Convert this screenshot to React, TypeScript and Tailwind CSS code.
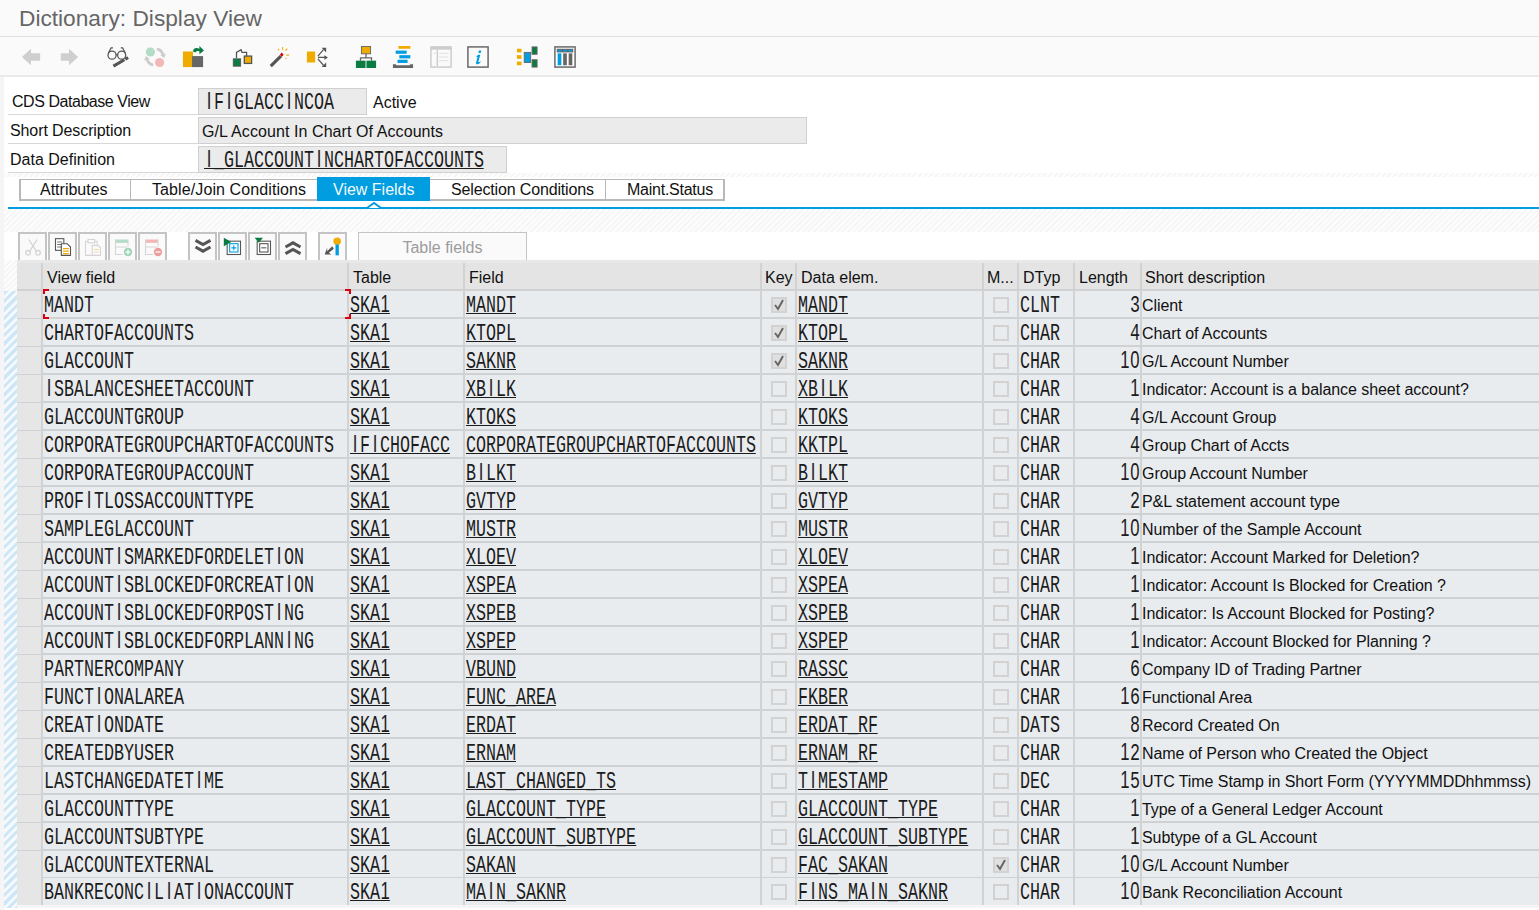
import React from "react";

type Row = [string, string, string, boolean, string, boolean, string, string, string];

const rows: Row[] = [
  ["MANDT", "SKA1", "MANDT", true, "MANDT", false, "CLNT", "3", "Client"],
  ["CHARTOFACCOUNTS", "SKA1", "KTOPL", true, "KTOPL", false, "CHAR", "4", "Chart of Accounts"],
  ["GLACCOUNT", "SKA1", "SAKNR", true, "SAKNR", false, "CHAR", "10", "G/L Account Number"],
  ["ISBALANCESHEETACCOUNT", "SKA1", "XBILK", false, "XBILK", false, "CHAR", "1", "Indicator: Account is a balance sheet account?"],
  ["GLACCOUNTGROUP", "SKA1", "KTOKS", false, "KTOKS", false, "CHAR", "4", "G/L Account Group"],
  ["CORPORATEGROUPCHARTOFACCOUNTS", "IFICHOFACC", "CORPORATEGROUPCHARTOFACCOUNTS", false, "KKTPL", false, "CHAR", "4", "Group Chart of Accts"],
  ["CORPORATEGROUPACCOUNT", "SKA1", "BILKT", false, "BILKT", false, "CHAR", "10", "Group Account Number"],
  ["PROFITLOSSACCOUNTTYPE", "SKA1", "GVTYP", false, "GVTYP", false, "CHAR", "2", "P&L statement account type"],
  ["SAMPLEGLACCOUNT", "SKA1", "MUSTR", false, "MUSTR", false, "CHAR", "10", "Number of the Sample Account"],
  ["ACCOUNTISMARKEDFORDELETION", "SKA1", "XLOEV", false, "XLOEV", false, "CHAR", "1", "Indicator: Account Marked for Deletion?"],
  ["ACCOUNTISBLOCKEDFORCREATION", "SKA1", "XSPEA", false, "XSPEA", false, "CHAR", "1", "Indicator: Account Is Blocked for Creation ?"],
  ["ACCOUNTISBLOCKEDFORPOSTING", "SKA1", "XSPEB", false, "XSPEB", false, "CHAR", "1", "Indicator: Is Account Blocked for Posting?"],
  ["ACCOUNTISBLOCKEDFORPLANNING", "SKA1", "XSPEP", false, "XSPEP", false, "CHAR", "1", "Indicator: Account Blocked for Planning ?"],
  ["PARTNERCOMPANY", "SKA1", "VBUND", false, "RASSC", false, "CHAR", "6", "Company ID of Trading Partner"],
  ["FUNCTIONALAREA", "SKA1", "FUNC_AREA", false, "FKBER", false, "CHAR", "16", "Functional Area"],
  ["CREATIONDATE", "SKA1", "ERDAT", false, "ERDAT_RF", false, "DATS", "8", "Record Created On"],
  ["CREATEDBYUSER", "SKA1", "ERNAM", false, "ERNAM_RF", false, "CHAR", "12", "Name of Person who Created the Object"],
  ["LASTCHANGEDATETIME", "SKA1", "LAST_CHANGED_TS", false, "TIMESTAMP", false, "DEC", "15", "UTC Time Stamp in Short Form (YYYYMMDDhhmmss)"],
  ["GLACCOUNTTYPE", "SKA1", "GLACCOUNT_TYPE", false, "GLACCOUNT_TYPE", false, "CHAR", "1", "Type of a General Ledger Account"],
  ["GLACCOUNTSUBTYPE", "SKA1", "GLACCOUNT_SUBTYPE", false, "GLACCOUNT_SUBTYPE", false, "CHAR", "1", "Subtype of a GL Account"],
  ["GLACCOUNTEXTERNAL", "SKA1", "SAKAN", false, "FAC_SAKAN", true, "CHAR", "10", "G/L Account Number"],
  ["BANKRECONCILIATIONACCOUNT", "SKA1", "MAIN_SAKNR", false, "FINS_MAIN_SAKNR", false, "CHAR", "10", "Bank Reconciliation Account"],
];

const gridCols = "grid grid-cols-[26px_306px_116px_297px_35px_187px_35px_56px_67px_1fr]";
const hatch = "bg-[repeating-linear-gradient(135deg,#f6f6f6_0px,#f6f6f6_2px,#fdfdfd_2px,#fdfdfd_4px)]";
const sep = "border-r-2 border-[#d2d2d2]";

// SAP's fixed pitch font: 10px per character, narrow tall glyphs.
// I, 0 and 1 have serifs/dots in the mono face, so they take the sans face in the same cell
function Fixed({ text, link, inBox }: { text: string; link?: boolean; inBox?: boolean }) {
  return (
    <span
      className={`inline-block h-[15px] origin-left scale-x-[0.7246] self-start whitespace-pre border-b font-['Liberation_Mono',monospace] text-[23px] leading-[14px] text-[#1c1c1c] ${
        inBox ? "mt-[7px]" : "mt-[8px]"
      } ${link ? "border-[#1c1c1c]" : "border-transparent"}`}
    >
      {text.split(/([I01])/).map((part, i) =>
        i % 2 === 1 ? (
          <span key={i} className="inline-block w-[13.8px] text-center font-['Liberation_Sans',sans-serif] leading-[10.3px]">
            {part}
          </span>
        ) : (
          part
        )
      )}
    </span>
  );
}

function Check({ on }: { on: boolean }) {
  return (
    <span className={`flex h-[16px] w-[16px] items-center justify-center border-2 border-[#d2d2d2] ${on ? "bg-[#e0e0e0]" : ""}`}>
      {on && (
        <svg width="12" height="12" viewBox="0 0 12 12">
          <path d="M2 6l3 4 5-9" fill="none" stroke="#666" strokeWidth="2" />
        </svg>
      )}
    </span>
  );
}

function Icon({ children, size = 22 }: { children: React.ReactNode; size?: number }) {
  return (
    <svg width={size} height={size} viewBox="0 0 24 24" className="shrink-0">
      {children}
    </svg>
  );
}

const topIcons = [
  [
    <path key="a" d="M2 12l10-9v5h10v8H12v5z" fill="#cfcfcf" />,
    <path key="b" d="M22 12l-10-9v5H3v8h9v5z" fill="#cfcfcf" />,
  ],
  [
    <g key="c" fill="none" stroke="#555" strokeWidth="1.4">
      <circle cx="5.500" cy="10" r="4.400" />
      <circle cx="16" cy="10" r="4.400" />
      <path d="M10 9.500h1.500M1.500 8l3-6h2M20 8l-3-6h-2" />
      <path d="M7 22l12-7" strokeWidth="3.400" />
      <path d="M20 14.500l3-2" strokeWidth="3.400" />
    </g>,
    <g key="d">
      <circle cx="7" cy="6.500" r="5" fill="#b2dcc6" />
      <circle cx="17" cy="18" r="5" fill="#f3b7b7" />
      <path d="M14 2c4 0 7 3 8 7l2-1-2 5-4-3 1-1c-1-2-3-4-5-4z" fill="#ccc" />
      <path d="M10 22c-4 0-7-3-8-7l-2 1 2-5 4 3-1 1c1 2 3 4 5 4z" fill="#ccc" />
    </g>,
    <g key="e">
      <rect x="1" y="6" width="11" height="17" fill="#f0ab00" />
      <rect x="11" y="11" width="12" height="12" fill="#666" />
      <path d="M12 6c0-3 3-5 7-3V0l5 5-5 4V6c-2-1-4 0-4 1z" fill="#0a7c42" />
    </g>,
  ],
  [
    <g key="f">
      <path d="M6 13V7l5-3 1 3h5v6" fill="none" stroke="#555" strokeWidth="1.4" />
      <rect x="2.500" y="14" width="8" height="8" fill="#0a7c42" stroke="#555" />
      <rect x="14.500" y="11" width="8" height="8" fill="#f0ab00" stroke="#555" strokeWidth="1.4" />
    </g>,
    <g key="g">
      <path d="M3 22L14 11" stroke="#555" strokeWidth="3.400" />
      <path d="M15 7l2 2.500-2 2.500-2-2.500z" fill="#d9000d" />
      <path d="M16 1v3M21 3l-2 2M23 10h-3M11 3l1 2M20 14l-1-1" stroke="#f0ab00" strokeWidth="1.200" />
    </g>,
    <g key="h">
      <rect x="1" y="6" width="9" height="12" fill="#f0ab00" />
      <path d="M13 11l6-7M13 12.500h8M13 14l6 7" stroke="#555" strokeWidth="1.300" fill="none" />
      <path d="M17 2h5v5zM20 10l4 2.500-4 2.500zM17 23h5v-5z" fill="#555" />
    </g>,
  ],
  [
    <g key="i">
      <rect x="7" y="0.500" width="10" height="8" fill="#f0ab00" stroke="#666" />
      <path d="M12 8.500V13M6 16v-3h12v3" fill="none" stroke="#666" strokeWidth="1.400" />
      <rect x="1" y="16" width="10.500" height="8" fill="#0a7c42" />
      <rect x="12.500" y="16" width="10.500" height="8" fill="#0a7c42" />
    </g>,
    <g key="j">
      <rect x="7" y="0" width="13" height="3" fill="#f0ab00" />
      <rect x="4" y="5" width="12" height="3.500" fill="#009de0" />
      <rect x="8" y="10" width="12" height="3.500" fill="#009de0" />
      <rect x="6" y="15" width="11" height="3.500" fill="#009de0" />
      <path d="M1 20h3l1 1h14l1-1h3v4H1z" fill="#666" />
    </g>,
    <g key="k">
      <rect x="1" y="1" width="22" height="22" fill="none" stroke="#ccc" strokeWidth="1.600" />
      <rect x="1" y="1" width="22" height="3" fill="#ccc" />
      <path d="M8 4v18" stroke="#ccc" strokeWidth="1.600" />
      <path d="M3.500 8h3M10 8h10M10 12h10M10 16h10" stroke="#ddd" />
    </g>,
    <g key="l">
      <rect x="1" y="1" width="22" height="22" fill="none" stroke="#666" strokeWidth="1.600" />
      <path d="M13 5h2.500l-.5 2.500h-2.500zM12 9.500h2.500l-2 7.500c0 1 1 1 2-.5l.5.5c-1 2-2 3-3.500 3-1.500 0-2-1-1.500-2.500l1.500-5.500H10z" fill="#009de0" />
    </g>,
  ],
  [
    <g key="m">
      <rect x="1" y="3" width="5" height="4" fill="#f0ab00" />
      <rect x="1" y="10" width="5" height="4" fill="#f0ab00" />
      <rect x="1" y="17" width="5" height="4" fill="#f0ab00" />
      <rect x="9" y="7" width="7" height="11" fill="#009de0" stroke="#666" />
      <rect x="17.500" y="1" width="5.500" height="8" fill="#0a7c42" stroke="#666" />
      <rect x="17.500" y="15" width="5.500" height="8" fill="#0a7c42" stroke="#666" />
    </g>,
    <g key="n">
      <rect x="1" y="1" width="22" height="22" fill="#fff" stroke="#666" strokeWidth="1.600" />
      <rect x="3" y="3" width="18" height="4" fill="#666" />
      <rect x="4" y="8" width="4" height="13" fill="#009de0" />
      <rect x="10" y="8" width="4" height="13" fill="#666" />
      <rect x="16" y="8" width="4" height="13" fill="#666" />
      <path d="M4 5h4M10 5h4M16 5h4" stroke="#009de0" strokeWidth="2" />
    </g>,
  ],
];

const tableButtons = [
  [
    <g key="cut" fill="none" stroke="#d4d4d4" strokeWidth="1.600">
      <circle cx="6" cy="19" r="2.800" />
      <circle cx="18" cy="19" r="2.800" />
      <path d="M8 17L17 3M16 17L7 3" />
    </g>,
    <g key="copy">
      <rect x="3" y="2" width="10" height="14" fill="#fff" stroke="#555" strokeWidth="1.300" />
      <path d="M5 6h6M5 9h6M5 12h6" stroke="#555" />
      <path d="M10 8h7l4 4v10H10z" fill="#fff" stroke="#555" strokeWidth="1.300" />
      <path d="M12 14h7M12 17h7M12 20h7" stroke="#f0ab00" strokeWidth="1.400" />
    </g>,
    <g key="paste" fill="none" stroke="#d4d4d4" strokeWidth="1.300">
      <path d="M6 5H3v17h9M14 5h3v4" />
      <rect x="6" y="3" width="8" height="4" />
      <path d="M11 10h7l3 3v9H11z" />
      <path d="M13 15h6M13 18h6" stroke="#f2dca5" />
    </g>,
    <g key="add">
      <rect x="3" y="3" width="15" height="4" fill="#b2dcc6" />
      <path d="M3 3v18h9M3 12h14M18 3v8" stroke="#d4d4d4" fill="none" strokeWidth="1.300" />
      <circle cx="18" cy="18" r="5" fill="#9fd3b6" />
      <path d="M15 18h6M18 15v6" stroke="#fff" strokeWidth="1.500" />
    </g>,
    <g key="del">
      <rect x="3" y="3" width="15" height="4" fill="#f3b7b7" />
      <path d="M3 3v18h9M3 12h14M18 3v8" stroke="#d4d4d4" fill="none" strokeWidth="1.300" />
      <circle cx="18" cy="18" r="5" fill="#ee9d9d" />
      <path d="M15 18h6" stroke="#fff" strokeWidth="1.500" />
    </g>,
  ],
  [
    <g key="down" fill="none" stroke="#555" strokeWidth="3.600">
      <path d="M3 4l9 5 9-5M3 12l9 5 9-5" />
    </g>,
    <g key="expand">
      <rect x="5" y="5" width="16" height="16" fill="#fff" stroke="#555" strokeWidth="1.300" />
      <rect x="8" y="8" width="10" height="10" fill="none" stroke="#009de0" strokeWidth="1.300" />
      <path d="M10 13h6M13 10v6" stroke="#009de0" strokeWidth="1.300" />
      <path d="M1 1l9 5-9 5z" fill="#0a7c42" />
    </g>,
    <g key="collapse">
      <rect x="5" y="5" width="16" height="16" fill="#fff" stroke="#555" strokeWidth="1.300" />
      <rect x="8" y="8" width="10" height="10" fill="none" stroke="#555" strokeWidth="1.300" />
      <path d="M10 13h6" stroke="#555" strokeWidth="1.300" />
      <path d="M2 1h10l-5 6z" fill="#0a7c42" />
    </g>,
    <g key="up" fill="none" stroke="#555" strokeWidth="3.600">
      <path d="M3 12l9-5 9 5M3 20l9-5 9 5" />
    </g>,
  ],
  [
    <g key="key">
      <circle cx="17" cy="5" r="4.500" fill="#f0ab00" />
      <rect x="15" y="9" width="4" height="13" fill="#009de0" />
      <path d="M11 11L5 17v-4l-3 8h8l-3-2 6-5z" fill="#555" />
    </g>,
  ],
];

const headers = ["View field", "Table", "Field", "Key", "Data elem.", "M...", "DTyp", "Length", "Short description"];

export default function App() {
  return (
    <div className="relative h-[910px] w-[1539px] overflow-hidden bg-white font-['Liberation_Sans',Arial,sans-serif] text-[16px] text-[#111]">
      <div className="flex h-[37px] items-center border-b border-[#e0e0e0] bg-[#fafafa] pl-[19px] text-[22.7px] text-[#666]">
        Dictionary: Display View
      </div>

      <div className="flex h-[40px] items-center gap-[27px] border-b-2 border-[#eaeaea] bg-[#fafafa] pl-[20px] pt-[1px]">
        {topIcons.map((group, i) => (
          <div key={i} className="flex gap-[15.5px]">
            {group.map((icon, j) => (
              <Icon key={j}>{icon}</Icon>
            ))}
          </div>
        ))}
      </div>

      <div className="flex h-[833px]">
        <div className="w-[4px] bg-[#f5f5f5]" />
        <div className="min-w-0 flex-1">
          <div className="flex h-[38px] items-end">
            <div className="ml-[4px] flex h-[28px] w-[190px] items-center border-b border-[#d8d8d8] pl-[4px] pt-[3px] tracking-[-0.45px]">CDS Database View</div>
            <div className="flex h-[27px] w-[169px] items-start border border-[#d0d0d0] bg-[#ebebeb] pl-[5px]">
              <Fixed text="IFIGLACCINCOA" inBox />
            </div>
            <div className="flex h-[28px] items-center pl-[6px] pt-[3px]">Active</div>
          </div>
          <div className="flex h-[29px] items-end">
            <div className="ml-[4px] flex h-[28px] w-[190px] items-center border-b border-[#d8d8d8] pl-[2px] pt-[2px] tracking-[-0.1px]">Short Description</div>
            <div className="flex h-[27px] w-[609px] items-center border border-[#d0d0d0] bg-[#ebebeb] pl-[3px] pt-[2px] tracking-[0.08px]">G/L Account In Chart Of Accounts</div>
          </div>
          <div className="flex h-[29px] items-end">
            <div className="ml-[4px] flex h-[28px] w-[190px] items-center border-b border-[#d8d8d8] pl-[2px] pt-[3px]">Data Definition</div>
            <div className="flex h-[27px] w-[309px] items-start border border-[#d0d0d0] bg-[#ebebeb] pl-[5px]">
              <Fixed text="I_GLACCOUNTINCHARTOFACCOUNTS" link inBox />
            </div>
          </div>

          <div className={`h-[4px] ${hatch}`} />

          <div className="ml-[15px] flex h-[24px] w-[706px] items-stretch">
            <div className="mt-[2px] flex w-[112px] items-center border-2 border-r border-t border-[#b8b8b8] pl-[19px] pt-[1px]">Attributes</div>
            <div className="mt-[2px] flex w-[186px] items-center border-b-2 border-t border-[#b8b8b8] pl-[21px] pt-[1px] tracking-[0.1px]">Table/Join Conditions</div>
            <div className="flex w-[113px] items-center bg-[#009de0] pl-[16px] pt-[2px] text-[#f2f9fd]">View Fields</div>
            <div className="mt-[2px] flex w-[176px] items-center border-b-2 border-r border-t border-[#b8b8b8] pl-[21px] pt-[1px] tracking-[-0.15px]">Selection Conditions</div>
            <div className="mt-[2px] flex w-[119px] items-center border-b-2 border-r-2 border-t border-[#b8b8b8] pl-[21px] pt-[1px] tracking-[-0.25px]">Maint.Status</div>
          </div>

          <div className="relative ml-[4px] mt-[6px] h-[2px] bg-[#009de0]">
            <svg width="16" height="8" viewBox="0 0 16 8" className="absolute left-[358px] top-[-6px]">
              <path d="M1 7l7-5 7 5" fill="#fff" stroke="#009de0" strokeWidth="2" />
            </svg>
          </div>

          <div className={`h-[23px] ${hatch}`} />
          <div className="flex h-[28px] items-stretch gap-[11px] pl-[14px]">
            {tableButtons.map((group, i) => (
              <div key={i} className={`flex gap-[1px] ${i === 0 ? "mr-[10px]" : ""}`}>
                {group.map((icon, j) => (
                  <div key={j} className="flex w-[29px] items-center justify-center border-2 border-b-0 border-[#c4c4c4] bg-[#fafafa]">
                    <Icon size={20}>{icon}</Icon>
                  </div>
                ))}
              </div>
            ))}
            <div className="flex w-[169px] items-center justify-center border border-b-0 border-[#c4c4c4] bg-[#fafafa] pt-[2px] text-[#9c9c9c]">Table fields</div>
          </div>

          <div className="flex h-[648px]">
            <div className="w-[13px]">
              <div className={`h-[31px] ${hatch}`} />
              <div className="h-[617px] bg-[repeating-linear-gradient(135deg,#cfe6f6_0px,#cfe6f6_3px,#f4f9fd_3px,#f4f9fd_6px)]" />
            </div>
            <div className="min-w-0 flex-1 border-t-[3px] border-[#e8e8e8] bg-[#f5f5f5]">
              <div className={`${gridCols} h-[28px] border-b-2 border-[#cfd1d3] bg-[#e4e4e4]`}>
                <div className={sep} />
                {headers.map((h, i) => (
                  <div key={h} className={`flex items-center overflow-hidden whitespace-nowrap pt-[3px] ${i === headers.length - 1 ? "pl-[3px]" : sep} ${i === 3 || i === 5 ? "pl-[3px]" : i === headers.length - 1 ? "" : "pl-[4px]"}`}>
                    {h}
                  </div>
                ))}
              </div>
              <div className="h-[616px]">
                {rows.map((r, i) => (
                  <div
                    key={i}
                    className={`${gridCols} ${i === rows.length - 1 ? "-mt-px h-[27px]" : "h-[28px] border-b-2 border-[#cfd1d3]"} bg-[#e9ecef]`}
                  >
                    <div className={`${sep} bg-[#e6e6e6]`} />
                    <div className={`relative flex ${sep} pl-[1px]`}>
                      <Fixed text={r[0]} />
                      {i === 0 && (
                        <>
                          <span className="absolute left-0 top-[-2px] h-[5px] w-[6px] border-l-2 border-t-2 border-[#d9000d]" />
                          <span className="absolute right-[-4px] top-[-2px] h-[5px] w-[6px] border-r-2 border-t-2 border-[#d9000d]" />
                          <span className="absolute bottom-[-1px] left-0 h-[5px] w-[6px] border-b-2 border-l-2 border-[#d9000d]" />
                          <span className="absolute bottom-[-1px] right-[-4px] h-[5px] w-[6px] border-b-2 border-r-2 border-[#d9000d]" />
                        </>
                      )}
                    </div>
                    <div className={`flex ${sep} pl-[1px]`}>
                      <Fixed text={r[1]} link />
                    </div>
                    <div className={`flex ${sep} pl-[1px]`}>
                      <Fixed text={r[2]} link />
                    </div>
                    <div className={`flex items-center justify-center ${sep}`}>
                      <Check on={r[3]} />
                    </div>
                    <div className={`flex ${sep} pl-[1px]`}>
                      <Fixed text={r[4]} link />
                    </div>
                    <div className={`flex items-center justify-center ${sep}`}>
                      <Check on={r[5]} />
                    </div>
                    <div className={`flex ${sep} pl-[1px]`}>
                      <Fixed text={r[6]} />
                    </div>
                    <div className={`flex justify-end ${sep}`}>
                      <span className="flex w-[20px]">
                        <Fixed text={r[7].padStart(2, " ")} />
                      </span>
                    </div>
                    <div className="flex items-center whitespace-nowrap pt-[3px] tracking-[-0.07px]">{r[8]}</div>
                  </div>
                ))}
              </div>
            </div>
          </div>
        </div>
      </div>
    </div>
  );
}
